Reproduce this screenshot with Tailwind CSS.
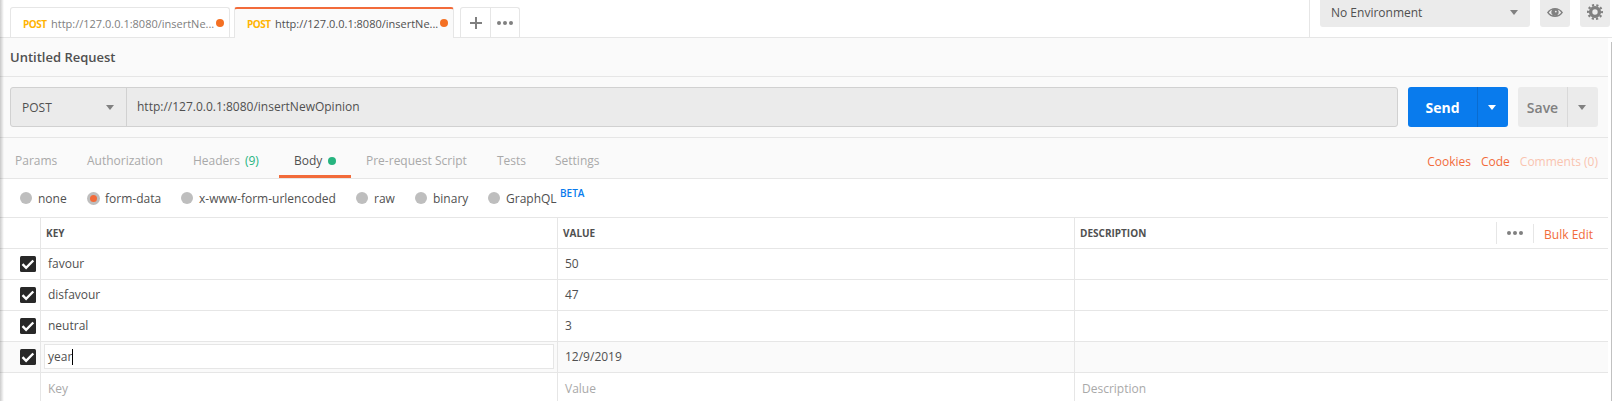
<!DOCTYPE html>
<html lang="en">
<head>
<meta charset="utf-8">
<title>Untitled Request</title>
<script src="https://cdn.jsdelivr.net/npm/@tailwindcss/browser@4"></script>
</head>
<body class="relative flex h-[401px] w-[1612px] flex-col overflow-hidden bg-white font-['Open_Sans',sans-serif] text-[12px] leading-4 text-[#505050]">

<!-- Tab bar -->
<header class="flex h-[38px] shrink-0 border-b border-[#e6e6e6] pl-[10px]">
  <div class="mt-[7px] flex h-[30px] w-[220px] items-center rounded-t-[3px] border border-b-0 border-[#e6e6e6] pl-3 pt-0.5">
    <span class="w-[28px] text-[10px] font-bold tracking-[-0.5px] text-[#ffb400]">POST</span>
    <span class="w-[165px] whitespace-nowrap text-[11px] text-[#808080]">http://127.0.0.1:8080/insertNe...</span>
    <span class="-mt-0.5 size-2 rounded-full bg-[#f47023]"></span>
  </div>
  <div class="ml-1 mt-[7px] flex h-[31px] w-[220px] items-center rounded-t-[3px] border border-b-0 border-t-2 border-[#e6e6e6] border-t-[#f26b3a] bg-[#fafafa] pl-3">
    <span class="w-[28px] text-[10px] font-bold tracking-[-0.5px] text-[#ffb400]">POST</span>
    <span class="w-[165px] whitespace-nowrap text-[11px] text-[#505050]">http://127.0.0.1:8080/insertNe...</span>
    <span class="-mt-0.5 size-2 rounded-full bg-[#f47023]"></span>
  </div>
  <div class="ml-[6px] mt-[7px] flex h-[30px] w-[60px] rounded-t-[3px] border border-b-0 border-[#e6e6e6]">
    <div class="flex w-[30px] items-center justify-center border-r border-[#e6e6e6]">
      <svg class="size-3" viewBox="0 0 12 12" fill="#808080"><path d="M5 0h2v5h5v2H7v5H5V7H0V5h5z"/></svg>
    </div>
    <div class="flex flex-1 items-center justify-center">
      <svg class="h-1 w-4" viewBox="0 0 16 4" fill="#808080"><circle cx="2" cy="2" r="2"/><circle cx="8" cy="2" r="2"/><circle cx="14" cy="2" r="2"/></svg>
    </div>
  </div>
  <div class="ml-auto flex h-[37px] items-start border-l border-[#e6e6e6] pl-[10px] pr-[2px]">
    <div class="flex h-[27px] w-[210px] items-center justify-between rounded-b-[3px] bg-[#ebebeb] pl-[11px] pr-3">
      <span class="-mt-0.5">No Environment</span>
      <svg class="-mt-0.5 h-[5px] w-2" viewBox="0 0 8 5" fill="#808080"><path d="M0 0h8L4 5z"/></svg>
    </div>
    <div class="ml-[10px] flex h-[27px] w-[30px] justify-center rounded-b-[3px] bg-[#ebebeb] pt-2">
      <svg class="h-[9px] w-4" viewBox="0 0 16 9"><path fill="#808080" fill-rule="evenodd" d="M0 4.5C2 1.5 4.800 0 8 0s6 1.500 8 4.500C14 7.500 11.200 9 8 9S2 7.500 0 4.500zM1.800 4.500C3 6.300 5.300 7.600 8 7.600s5-1.300 6.200-3.100C13.400 3.200 12.100 2.200 10.800 1.700c.6.7.9 1.700.9 2.600C11.700 6.300 10 7.700 8 7.700S4.300 6.300 4.300 4.300c0-.9.300-1.900.9-2.600-1.300.5-2.600 1.500-3.400 2.800z"/><circle cx="8" cy="4.400" r="2.300" fill="#808080"/><circle cx="8.800" cy="3.600" r="0.900" fill="#ebebeb"/></svg>
    </div>
    <div class="ml-[10px] flex h-[27px] w-[30px] justify-center rounded-b-[3px] bg-[#ebebeb] pt-1">
      <svg class="size-4" viewBox="-8 -8 16 16"><circle r="4.400" fill="none" stroke="#808080" stroke-width="3.400"/><circle r="6.900" fill="none" stroke="#808080" stroke-width="2.200" stroke-dasharray="2.168 2.168" stroke-dashoffset="1.084"/></svg>
    </div>
  </div>
</header>

<main class="mr-1 flex flex-1 flex-col">
  <div class="flex h-[39px] shrink-0 items-center border-b border-[#e6e6e6] bg-[#fafafa] pl-[10px]">
    <h1 class="text-[13px] font-semibold">Untitled Request</h1>
  </div>

  <!-- Request line -->
  <div class="flex h-[61px] shrink-0 bg-[#fafafa] border-b border-[#e6e6e6] pl-[10px] pt-[10px]">
    <div class="flex h-10 w-[1388px] rounded-[3px] border border-[#d1d1d1] bg-[#ebebeb]">
      <div class="flex w-[116px] items-center justify-between border-r border-[#d1d1d1] pl-[11px] pr-3">
        <span class="pt-px">POST</span>
        <svg class="h-[5px] w-2" viewBox="0 0 8 5" fill="#808080"><path d="M0 0h8L4 5z"/></svg>
      </div>
      <div class="flex items-center pl-[10px]"><span>http://127.0.0.1:8080/insertNewOpinion</span></div>
    </div>
    <div class="ml-[10px] flex h-10 w-[100px] rounded-[3px] bg-[#097bed] text-white">
      <div class="flex w-[70px] items-center justify-center border-r border-[#0a6cd0] pt-0.5 text-[14px] font-bold">Send</div>
      <div class="flex flex-1 items-center justify-center pr-0.5"><svg class="h-[5px] w-2" viewBox="0 0 8 5" fill="#fff"><path d="M0 0h8L4 5z"/></svg></div>
    </div>
    <div class="ml-[10px] flex h-10 w-[80px] rounded-[3px] bg-[#ebebeb] text-[#808080]">
      <div class="flex w-[50px] items-center justify-center border-r border-[#d9d9d9] pt-0.5 text-[14px] font-semibold">Save</div>
      <div class="flex flex-1 items-center justify-center pr-0.5"><svg class="h-[5px] w-2" viewBox="0 0 8 5" fill="#808080"><path d="M0 0h8L4 5z"/></svg></div>
    </div>
  </div>

  <!-- Request section tabs -->
  <nav class="flex h-[41px] shrink-0 items-stretch border-b border-[#e6e6e6] bg-[#fafafa] pl-[15px] text-[#a9a9a9]">
    <div class="flex w-[72px] items-center pt-[6px]">Params</div>
    <div class="flex w-[106px] items-center pt-[6px]">Authorization</div>
    <div class="flex w-[86px] items-center gap-[5px] pt-[6px]">Headers <span class="text-[#26b47f]">(9)</span></div>
    <div class="flex h-[40px] w-[72px] items-center gap-[6px] border-b-[3px] border-[#f26b3a] pl-[15px] pt-[9px] text-[#505050]"><span>Body</span><span class="size-2 rounded-full bg-[#26b47f]"></span></div>
    <div class="ml-[15px] flex w-[131px] items-center pt-[6px]">Pre-request Script</div>
    <div class="flex w-[58px] items-center pt-[6px]">Tests</div>
    <div class="flex items-center pt-[6px]">Settings</div>
    <div class="ml-auto flex items-center gap-[10px] pr-[10px] pt-[7px] text-[#f26b3a]"><span>Cookies</span><span>Code</span><span class="text-[#f9c4b0]">Comments (0)</span></div>
  </nav>

  <!-- Body type -->
  <div class="flex h-[39px] shrink-0 items-center border-b border-[#e6e6e6] pl-5 [&_span]:pt-0.5">
    <div class="flex w-[67px] items-center gap-[6px]"><i class="size-3 rounded-full bg-[#bebebe]"></i><span>none</span></div>
    <div class="flex w-[94px] items-center gap-[5px]"><i class="flex size-[13px] items-center justify-center rounded-full bg-[#bebebe]"><i class="size-[7px] rounded-full bg-[#f26b3a]"></i></i><span>form-data</span></div>
    <div class="flex w-[175px] items-center gap-[6px]"><i class="size-3 rounded-full bg-[#bebebe]"></i><span>x-www-form-urlencoded</span></div>
    <div class="flex w-[59px] items-center gap-[6px]"><i class="size-3 rounded-full bg-[#bebebe]"></i><span>raw</span></div>
    <div class="flex w-[73px] items-center gap-[6px]"><i class="size-3 rounded-full bg-[#bebebe]"></i><span>binary</span></div>
    <div class="flex items-center gap-[6px]"><i class="size-3 rounded-full bg-[#bebebe]"></i><span class="w-[48px]">GraphQL</span><span class="-mt-[12px] text-[10px] font-semibold text-[#097bed]">BETA</span></div>
  </div>

  <!-- Form data table -->
  <div class="grid h-[31px] shrink-0 grid-cols-[41px_517px_517px_1fr] border-b border-[#e6e6e6] text-[10px] font-bold [&>div]:border-[#e6e6e6]">
    <div class="border-r"></div>
    <div class="flex items-center border-r pl-[5px]"><span>KEY</span></div>
    <div class="flex items-center border-r pl-[5px]"><span>VALUE</span></div>
    <div class="flex items-center pl-[5px]"><span>DESCRIPTION</span>
      <div class="ml-auto flex h-[22px] items-center border-l border-[#e6e6e6] pl-[10px] pr-[15px]">
        <svg class="h-1 w-4" viewBox="0 0 16 4" fill="#808080"><circle cx="2" cy="2" r="2"/><circle cx="8" cy="2" r="2"/><circle cx="14" cy="2" r="2"/></svg>
        <span class="ml-[10px] border-l border-[#e6e6e6] pl-[10px] pt-[3px] text-[12px] font-normal text-[#f26b3a]">Bulk Edit</span>
      </div>
    </div>
  </div>
  <div class="grid h-[31px] shrink-0 grid-cols-[41px_517px_517px_1fr] border-b border-[#e6e6e6] [&>div]:border-[#e6e6e6]">
    <div class="flex items-center border-r pl-5"><svg class="size-4" viewBox="0 0 16 16"><rect width="16" height="16" rx="1.500" fill="#282828"/><path d="M2.500 8.200l3.600 3.600 7.200-7.300" fill="none" stroke="#fff" stroke-width="2.400"/></svg></div>
    <div class="flex items-center border-r pl-[7px]"><span>favour</span></div>
    <div class="flex items-center border-r pl-[7px]"><span>50</span></div><div></div>
  </div>
  <div class="grid h-[31px] shrink-0 grid-cols-[41px_517px_517px_1fr] border-b border-[#e6e6e6] [&>div]:border-[#e6e6e6]">
    <div class="flex items-center border-r pl-5"><svg class="size-4" viewBox="0 0 16 16"><rect width="16" height="16" rx="1.500" fill="#282828"/><path d="M2.500 8.200l3.600 3.600 7.200-7.300" fill="none" stroke="#fff" stroke-width="2.400"/></svg></div>
    <div class="flex items-center border-r pl-[7px]"><span>disfavour</span></div>
    <div class="flex items-center border-r pl-[7px]"><span>47</span></div><div></div>
  </div>
  <div class="grid h-[31px] shrink-0 grid-cols-[41px_517px_517px_1fr] border-b border-[#e6e6e6] [&>div]:border-[#e6e6e6]">
    <div class="flex items-center border-r pl-5"><svg class="size-4" viewBox="0 0 16 16"><rect width="16" height="16" rx="1.500" fill="#282828"/><path d="M2.500 8.200l3.600 3.600 7.200-7.300" fill="none" stroke="#fff" stroke-width="2.400"/></svg></div>
    <div class="flex items-center border-r pl-[7px]"><span>neutral</span></div>
    <div class="flex items-center border-r pl-[7px]"><span>3</span></div><div></div>
  </div>
  <div class="grid h-[31px] shrink-0 grid-cols-[41px_517px_517px_1fr] border-b border-[#e6e6e6] bg-[#fafafa] [&>div]:border-[#e6e6e6]">
    <div class="flex items-center border-r pl-5"><svg class="size-4" viewBox="0 0 16 16"><rect width="16" height="16" rx="1.500" fill="#282828"/><path d="M2.500 8.200l3.600 3.600 7.200-7.300" fill="none" stroke="#fff" stroke-width="2.400"/></svg></div>
    <div class="flex items-start border-r px-[3px] pt-0.5"><div class="flex h-[25px] flex-1 items-center border border-[#e6e6e6] bg-white pl-[3px]"><span>year</span><i class="h-4 w-px bg-black"></i></div></div>
    <div class="flex items-center border-r pl-[7px]"><span>12/9/2019</span></div><div></div>
  </div>
  <div class="grid h-[28px] shrink-0 grid-cols-[41px_517px_517px_1fr] text-[#a9a9a9] [&>div]:border-[#e6e6e6]">
    <div class="border-r"></div>
    <div class="flex items-center border-r pl-[7px] pt-[3px]"><span>Key</span></div>
    <div class="flex items-center border-r pl-[7px] pt-[3px]"><span>Value</span></div>
    <div class="flex items-center pl-[7px] pt-[3px]"><span>Description</span></div>
  </div>
</main>

<!-- Edge shadow of the sidebar and the scrollbar -->
<div class="absolute inset-y-0 left-0 w-1 bg-linear-to-r from-black/20 to-transparent"></div>
<div class="absolute bottom-0 right-0 top-[42px] w-px bg-[#c1c1c1]"></div>
</body>
</html>
